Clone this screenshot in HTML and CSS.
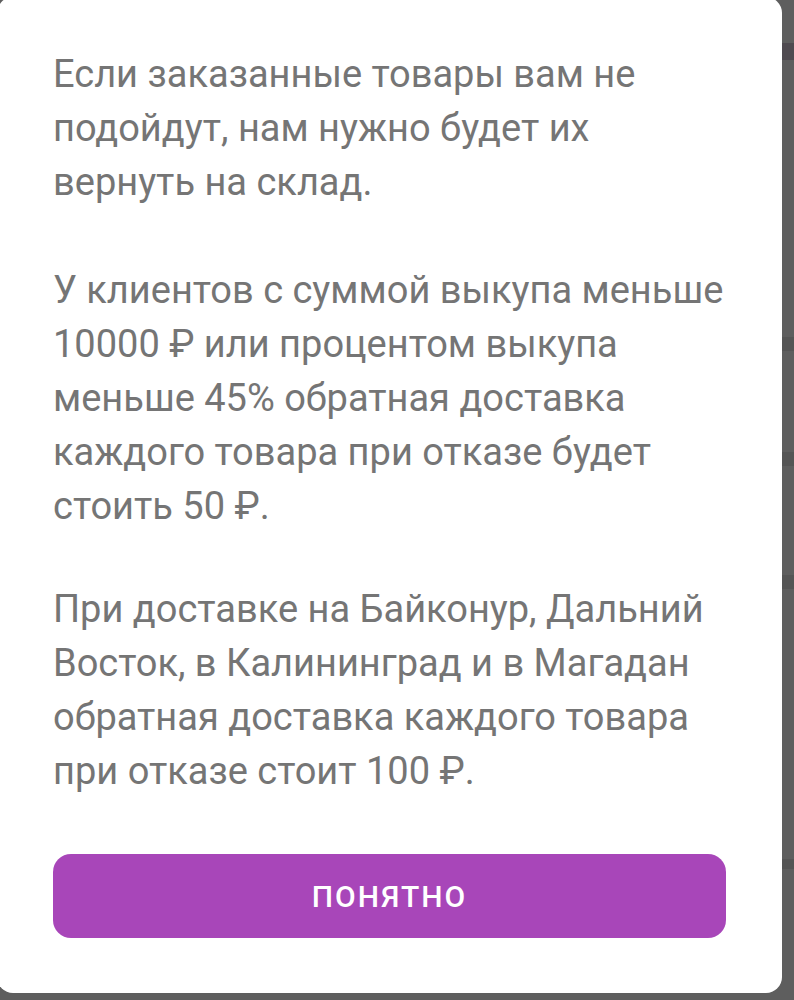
FILE: index.html
```html
<!DOCTYPE html>
<html lang="ru">
<head>
  <meta charset="UTF-8">
  <title>Возврат товаров</title>
  <link rel="stylesheet" href="styles.css">
</head>
<body>

  <div class="backdrop">
    <div class="strip strip-top"></div>
    <div class="gap gap-1"></div>
    <div class="strip"></div>
    <div class="gap gap-2"></div>
    <div class="strip"></div>
    <div class="gap gap-3"></div>
    <div class="strip"></div>
    <div class="gap gap-4"></div>
    <div class="strip strip-thin"></div>
  </div>

  <div class="dialog">
    <p>Если заказанные товары вам не подойдут, нам нужно будет их вернуть на склад.</p>
    <p class="mid">У клиентов с суммой выкупа меньше 10000 ₽ или процентом выкупа меньше 45% обратная доставка каждого товара при отказе будет стоить 50 ₽.</p>
    <p class="last">При доставке на Байконур, Дальний Восток, в Калининград и в Магадан обратная доставка каждого товара при отказе стоит 100 ₽.</p>
    <button class="ok">Понятно</button>
  </div>

</body>
</html>
```

FILE: styles.css
```css
body {
  margin: 0;
  background: #5e5e5e;
  font-family: Roboto, "Noto Sans", sans-serif;
  overflow: hidden;
  height: 1000px;
}

.backdrop {
  padding-top: 43px;
  display: flex;
  flex-direction: column;
}

.strip {
  height: 14px;
  background: #555555;
}

.strip-top {
  height: 17px;
  background: #4f4a50;
}

.strip-thin {
  height: 10px;
}

.gap-1 { height: 277px; }
.gap-2 { height: 101px; }
.gap-3 { height: 109px; }
.gap-4 { height: 270px; }

.dialog {
  position: absolute;
  left: -3px;
  top: -3px;
  width: 785px;
  box-sizing: border-box;
  padding: 50px 56px 55px;
  background: #fff;
  border-radius: 16px;
}

.dialog p {
  margin: 0 0 54px;
  font-size: 38px;
  line-height: 54px;
  color: #757575;
}

.dialog p.mid {
  margin-bottom: 49px;
}

.dialog p.last {
  margin-bottom: 56px;
}

.ok {
  display: block;
  width: 100%;
  height: 84px;
  border: none;
  border-radius: 18px;
  background: #a846b9;
  color: #fff;
  font-family: Roboto, "Noto Sans", sans-serif;
  font-size: 30px;
  font-weight: 500;
  letter-spacing: 2px;
  text-transform: uppercase;
}
```
